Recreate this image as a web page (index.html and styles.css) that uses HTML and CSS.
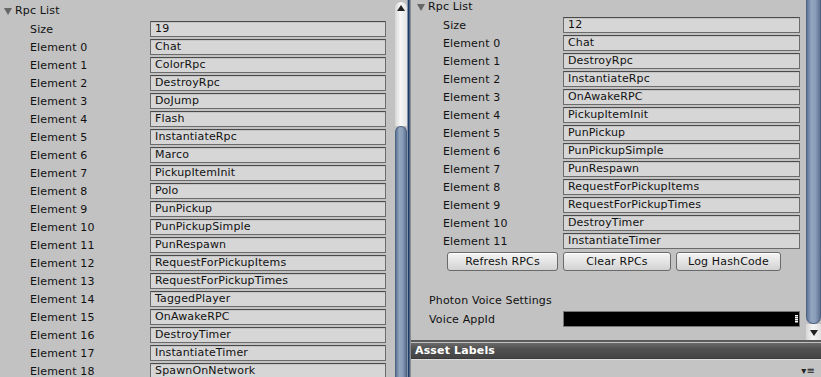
FILE: index.html
```html
<!DOCTYPE html>
<html lang="en">
<head>
    <meta charset="UTF-8">
    <title>Rpc List</title>
    <link rel="stylesheet" href="styles.css">
</head>
<body>
    <div class="left">
        <div class="pane">
            <div class="foldout"><span class="tri"></span>Rpc List</div>
            <div class="row"><span class="label">Size</span><span class="field">19</span></div>
            <div class="row"><span class="label">Element 0</span><span class="field">Chat</span></div>
            <div class="row"><span class="label">Element 1</span><span class="field">ColorRpc</span></div>
            <div class="row"><span class="label">Element 2</span><span class="field">DestroyRpc</span></div>
            <div class="row"><span class="label">Element 3</span><span class="field">DoJump</span></div>
            <div class="row"><span class="label">Element 4</span><span class="field">Flash</span></div>
            <div class="row"><span class="label">Element 5</span><span class="field">InstantiateRpc</span></div>
            <div class="row"><span class="label">Element 6</span><span class="field">Marco</span></div>
            <div class="row"><span class="label">Element 7</span><span class="field">PickupItemInit</span></div>
            <div class="row"><span class="label">Element 8</span><span class="field">Polo</span></div>
            <div class="row"><span class="label">Element 9</span><span class="field">PunPickup</span></div>
            <div class="row"><span class="label">Element 10</span><span class="field">PunPickupSimple</span></div>
            <div class="row"><span class="label">Element 11</span><span class="field">PunRespawn</span></div>
            <div class="row"><span class="label">Element 12</span><span class="field">RequestForPickupItems</span></div>
            <div class="row"><span class="label">Element 13</span><span class="field">RequestForPickupTimes</span></div>
            <div class="row"><span class="label">Element 14</span><span class="field">TaggedPlayer</span></div>
            <div class="row"><span class="label">Element 15</span><span class="field">OnAwakeRPC</span></div>
            <div class="row"><span class="label">Element 16</span><span class="field">DestroyTimer</span></div>
            <div class="row"><span class="label">Element 17</span><span class="field">InstantiateTimer</span></div>
            <div class="row"><span class="label">Element 18</span><span class="field">SpawnOnNetwork</span></div>
        </div>
        <div class="scroll scroll-left">
            <div class="track-top"><span class="arrow-up"></span></div>
            <div class="thumb thumb-low"></div>
        </div>
        <div class="divider"></div>
    </div>

    <div class="right">
        <div class="upper">
            <div class="pane pane-right">
                <div class="foldout"><span class="tri"></span>Rpc List</div>
                <div class="row"><span class="label">Size</span><span class="field">12</span></div>
                <div class="row"><span class="label">Element 0</span><span class="field">Chat</span></div>
                <div class="row"><span class="label">Element 1</span><span class="field">DestroyRpc</span></div>
                <div class="row"><span class="label">Element 2</span><span class="field">InstantiateRpc</span></div>
                <div class="row"><span class="label">Element 3</span><span class="field">OnAwakeRPC</span></div>
                <div class="row"><span class="label">Element 4</span><span class="field">PickupItemInit</span></div>
                <div class="row"><span class="label">Element 5</span><span class="field">PunPickup</span></div>
                <div class="row"><span class="label">Element 6</span><span class="field">PunPickupSimple</span></div>
                <div class="row"><span class="label">Element 7</span><span class="field">PunRespawn</span></div>
                <div class="row"><span class="label">Element 8</span><span class="field">RequestForPickupItems</span></div>
                <div class="row"><span class="label">Element 9</span><span class="field">RequestForPickupTimes</span></div>
                <div class="row"><span class="label">Element 10</span><span class="field">DestroyTimer</span></div>
                <div class="row"><span class="label">Element 11</span><span class="field">InstantiateTimer</span></div>
                <div class="buttons">
                    <button class="btn-refresh">Refresh RPCs</button>
                    <button class="btn-clear">Clear RPCs</button>
                    <button class="btn-log">Log HashCode</button>
                </div>
                <div class="plain">Photon Voice Settings</div>
                <div class="row row-plain"><span class="label">Voice AppId</span><span class="field field-dark"><span class="grip"></span></span></div>
            </div>
            <div class="scroll scroll-right">
                <div class="thumb thumb-high"></div>
                <div class="track-bottom"><span class="arrow-down"></span></div>
            </div>
        </div>
        <div class="asset-bar">Asset Labels</div>
        <div class="asset-body"><span class="menu-icon">&#9662;&#8801;</span></div>
    </div>
</body>
</html>
```

FILE: styles.css
```css
html, body { margin: 0; padding: 0; }
body { display: flex; width: 821px; height: 377px; overflow: hidden; background: #c2c2c2; font-family: "DejaVu Sans", Verdana, sans-serif; font-size: 11px; letter-spacing: 0.15px; color: #111; }

.left { display: flex; width: 410px; flex: none; }
.pane { width: 393px; flex: none; padding-top: 2px; }
.foldout { height: 18px; line-height: 18px; display: flex; align-items: center; padding-left: 4px; }
.tri { width: 0; height: 0; border-left: 4px solid transparent; border-right: 4px solid transparent; border-top: 7px solid #666; margin-right: 3px; }
.row { height: 18px; display: flex; align-items: center; }
.label { width: 120px; padding-left: 30px; flex: none; }
.field { width: 230px; height: 14px; line-height: 14px; padding-left: 4px; background: #d6d6d6; border: 1px solid #6b6b6b; border-top-color: #4a4a4a; box-shadow: inset 0 1px 0 #c4c4c4; }

.scroll { width: 14px; flex: none; display: flex; flex-direction: column; }
.scroll-left { padding-left: 2px; width: 12px; }
.track-top { height: 124px; margin-top: 2px; display: flex; justify-content: center; background: linear-gradient(to right, #d6d6d6, #f7f7f7 45%, #e4e4e4); border-radius: 6px 6px 0 0; }
.arrow-up { margin-top: 3px; width: 0; height: 0; border-left: 4px solid transparent; border-right: 4px solid transparent; border-bottom: 6px solid #222; }
.thumb { background: linear-gradient(to right, #5f7596, #93a6c0 35%, #8a9db8 65%, #5d7393); border: 1px solid #4c6283; }
.thumb-low { flex: 1; border-radius: 6px 6px 0 0; border-bottom: none; }
.divider { width: 3px; flex: none; background: linear-gradient(to right, #d0d4dc, #1c3a66 40%, #1c3a66 70%, #8c98aa); }

.right { flex: 1; display: flex; flex-direction: column; border-left: 1px solid #8c8c8c; }
.upper { display: flex; height: 340px; border-bottom: 2px solid #5a5a5a; }
.pane-right { width: 391px; padding-left: 2px; padding-top: 0; margin-top: -2px; }
.pane-right .field { width: 231px; }
.buttons { display: flex; gap: 5px; padding-left: 34px; margin-top: 2px; height: 19px; }
.buttons button { height: 19px; padding: 0; font: inherit; letter-spacing: 0.15px; color: #111; border: 1px solid #6a6a6a; border-radius: 3px; background: linear-gradient(#f4f4f4, #e4e4e4 50%, #d2d2d2); box-shadow: inset 0 1px 0 #fff; }
.btn-refresh { width: 111px; }
.btn-clear { width: 108px; }
.btn-log { width: 105px; }
.plain { margin-top: 21px; height: 18px; line-height: 18px; padding-left: 16px; }
.row-plain .label { padding-left: 16px; width: 134px; }
.field-dark { background: #000; border-color: #777; box-shadow: none; position: relative; }
.grip { position: absolute; right: 1px; top: 3px; width: 3px; height: 8px; background: repeating-linear-gradient(#fff 0 1px, #777 1px 2px); }

.scroll-right { width: 15px; margin-left: auto; }
.thumb-high { flex: 1; border-radius: 0 0 7px 7px; border-top: none; }
.track-bottom { height: 16px; display: flex; justify-content: center; background: linear-gradient(to right, #d6d6d6, #f4f4f4 45%, #e0e0e0); }
.arrow-down { margin-top: 6px; width: 0; height: 0; border-left: 4px solid transparent; border-right: 4px solid transparent; border-top: 6px solid #222; }

.asset-bar { height: 15px; line-height: 15px; padding-left: 4px; margin-top: 1px; color: #fff; font-weight: bold; background: linear-gradient(#6a6a6a, #505050 40%, #444); border-bottom: 1px solid #3a3a3a; }
.asset-body { flex: 1; background: #c4c4c4; border-top: 1px solid #dcdcdc; display: flex; justify-content: flex-end; align-items: flex-end; padding-right: 6px; }
.menu-icon { font-size: 10px; line-height: 12px; color: #222; }
```
